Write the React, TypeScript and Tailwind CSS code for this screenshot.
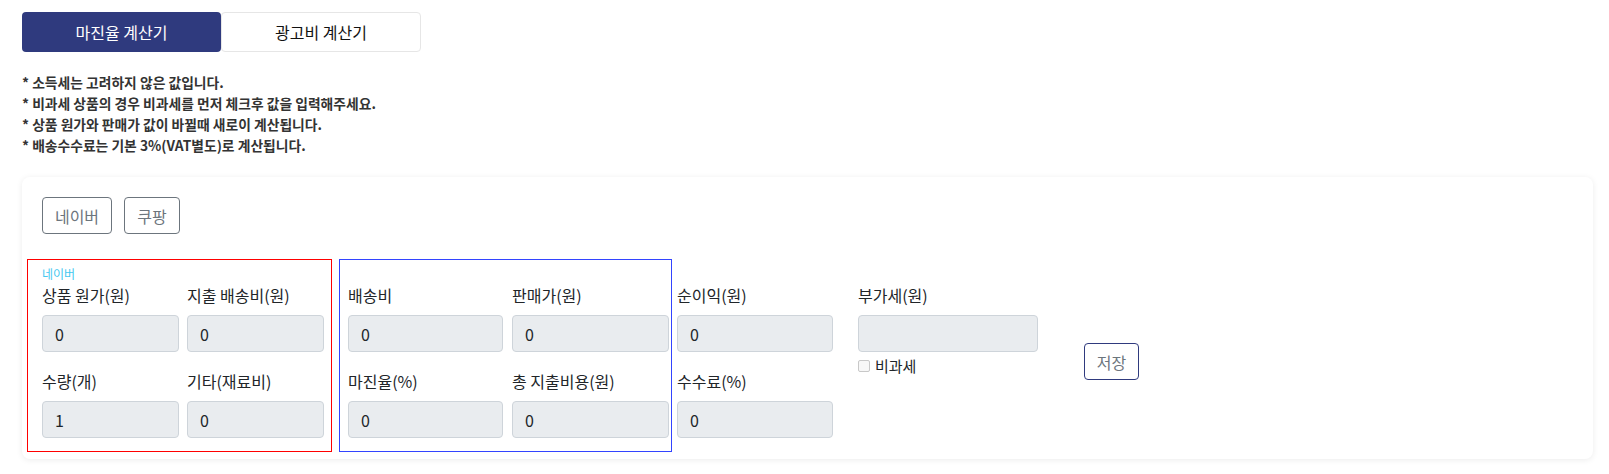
import React from 'react';

const font = { fontFamily: '"Noto Sans CJK KR", "Noto Sans", sans-serif' };

function Field({ label, value, width }: { label: string; value: string; width: string }) {
  return (
    <div className={`flex flex-col ${width}`}>
      <div className="text-[16px] leading-[24px] text-[#212529] whitespace-nowrap">{label}</div>
      <div className="mt-[8px] h-[37px] rounded-[4px] border border-[#ced4da] bg-[#e9ecef] px-[12px] flex items-center text-[16px] text-[#212529]">
        {value}
      </div>
    </div>
  );
}

export default function App() {
  return (
    <div className="min-h-screen bg-white pl-[22px] pt-[12px] pr-[16px]" style={font}>
      {/* tabs */}
      <div className="flex">
        <button className="w-[199px] h-[40px] rounded-[4px] bg-[#2f3a7e] text-white text-[16px]">마진율 계산기</button>
        <button className="w-[200px] h-[40px] rounded-[4px] border border-[#e6e6e6] bg-white text-[#111] text-[16px]">광고비 계산기</button>
      </div>

      {/* notes */}
      <div className="mt-[20px] text-[13.8px] leading-[21px] font-bold text-[#333]">
        <p>* 소득세는 고려하지 않은 값입니다.</p>
        <p>* 비과세 상품의 경우 비과세를 먼저 체크후 값을 입력해주세요.</p>
        <p>* 상품 원가와 판매가 값이 바뀔때 새로이 계산됩니다.</p>
        <p>* 배송수수료는 기본 3%(VAT별도)로 계산됩니다.</p>
      </div>

      {/* card */}
      <div className="mt-[21px] w-[1571px] h-[282px] rounded-[8px] bg-white shadow-[0_1px_6px_rgba(0,0,0,0.08)] px-[5px] pt-[20px]">
        <div className="flex gap-[12px] ml-[15px]">
          <button className="w-[70px] h-[37px] rounded-[4px] border border-[#6c757d] text-[#6c757d] text-[16px]">네이버</button>
          <button className="w-[56px] h-[37px] rounded-[4px] border border-[#6c757d] text-[#6c757d] text-[16px]">쿠팡</button>
        </div>

        <div className="mt-[25px] flex items-start">
          {/* naver inputs */}
          <div className="w-[305px] h-[193px] border border-[#ff0000] pl-[14px] pr-[7px] pt-[5px]">
            <div className="text-[12px] leading-[18px] text-[#45c8f0]">네이버</div>
            <div className="grid grid-cols-[137px_137px] gap-x-[8px] gap-y-[17px]">
              <Field label="상품 원가(원)" value="0" width="w-[137px]" />
              <Field label="지출 배송비(원)" value="0" width="w-[137px]" />
              <Field label="수량(개)" value="1" width="w-[137px]" />
              <Field label="기타(재료비)" value="0" width="w-[137px]" />
            </div>
          </div>

          {/* results */}
          <div className="ml-[7px] w-[333px] h-[193px] border border-[#3344ff] pl-[8px] pt-[23px]">
            <div className="grid grid-cols-[155px_157px] gap-x-[9px] gap-y-[17px]">
              <Field label="배송비" value="0" width="w-[155px]" />
              <Field label="판매가(원)" value="0" width="w-[157px]" />
              <Field label="마진율(%)" value="0" width="w-[155px]" />
              <Field label="총 지출비용(원)" value="0" width="w-[157px]" />
            </div>
          </div>

          <div className="ml-[5px] pt-[24px] flex flex-col gap-y-[17px]">
            <Field label="순이익(원)" value="0" width="w-[156px]" />
            <Field label="수수료(%)" value="0" width="w-[156px]" />
          </div>

          <div className="ml-[25px] pt-[24px] flex flex-col">
            <Field label="부가세(원)" value="" width="w-[180px]" />
            <label className="mt-[4px] flex items-center gap-[5px] text-[15px] leading-[20px] text-[#212529]">
              <span className="w-[12px] h-[12px] rounded-[2px] border border-[#c8c8c8] bg-[#f7f7f7]" />
              비과세
            </label>
          </div>

          <button className="ml-[46px] mt-[84px] w-[55px] h-[37px] rounded-[4px] border border-[#2f3a7e] text-[#6c757d] text-[16px]">저장</button>
        </div>
      </div>
    </div>
  );
}
